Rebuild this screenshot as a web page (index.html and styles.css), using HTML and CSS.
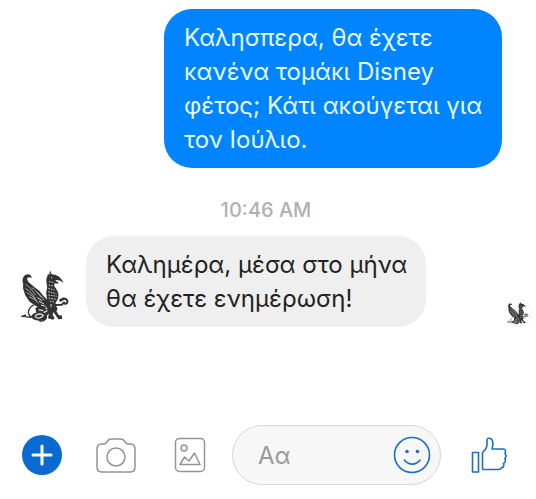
FILE: index.html
```
<!DOCTYPE html>
<html lang="el">
<head>
    <meta charset="utf-8">
    <meta name="viewport" content="width=device-width, initial-scale=1">
    <title>Chat</title>
    <link rel="stylesheet" href="styles.css">
</head>
<body>
    <!-- Shared griffin drawing, used by both avatars -->
    <svg class="symbols" aria-hidden="true">
        <symbol id="griffin" viewBox="27 27 150 156">
            <!-- wing -->
            <path fill="#333335" d="M62 52C63 41 51 36 43 42C34 48 33 60 37 70C34 80 38 88 40 94C41 104 47 108 50 114C54 123 62 126 69 131C78 139 88 140 98 142L114 138L112 123C106 112 98 106 92 98C84 86 72 82 64 73C56 67 49 60 48 54C50 48 56 46 62 52Z"/>
            <path fill="none" stroke="#ddd" stroke-width="2" d="M44 70C54 77 65 88 73 103M43 83C54 88 65 99 73 113M47 95C58 99 69 109 78 121M54 108C64 110 73 117 83 127M62 80C73 87 83 97 90 109M76 93C86 100 94 107 99 118"/>
            <path fill="none" stroke="#ddd" stroke-width="3" d="M79 110L93 119M84 121L99 129M90 132L104 136"/>
            <!-- head and hooked beak -->
            <path fill="#333335" d="M109 46L111 38L115 42L117 28L122 40C135 40 151 48 157 66C149 59 142 57 135 57L133 60L143 64L139 68L131 67L128 77L109 78C106 66 104 55 109 46Z"/>
            <circle cx="122" cy="50" r="2" fill="#eee"/>
            <!-- neck and chest -->
            <path fill="#333335" d="M109 73L129 72C132 82 143 90 142 102C143 114 136 120 134 126L129 146L110 148L106 132C110 121 106 113 107 103C103 95 109 88 109 73Z"/>
            <path fill="none" stroke="#ccc" stroke-width="3" stroke-dasharray="5 3" d="M114 62L127 64M113 72L127 75M112 82L130 87M111 92L136 98M112 102L138 106M113 111L134 115M116 120L129 123"/>
            <path fill="none" stroke="#ddd" stroke-width="3" d="M121 129L119 142"/>
            <!-- raised front leg -->
            <path fill="none" stroke="#333335" stroke-width="6" stroke-linejoin="round" d="M132 132L152 131L161 123M145 118L160 114M151 122C147 112 164 108 169 119C171 126 163 132 158 125"/>
            <!-- standing legs -->
            <path fill="#333335" d="M118 138L135 134L140 144L136 150L143 162L153 164L153 174L142 175L136 166L127 153L125 162L131 171L126 176L111 172L115 150Z"/>
            <!-- haunch and coiled tail -->
            <path fill="#333335" d="M73 142C84 132 99 137 107 145L119 145L115 157C109 162 105 165 107 173C98 181 77 181 66 174C56 166 64 157 76 155Z"/>
            <path fill="none" stroke="#ddd" stroke-width="4" d="M72 166C77 157 92 157 97 164C89 173 77 174 72 166M83 146L97 149M98 155L109 149"/>
            <path fill="none" stroke="#333335" stroke-width="4" d="M68 169C53 169 48 154 56 142C59 137 65 134 68 131M61 169C51 171 43 164 31 167L45 162M84 178C94 184 106 177 107 166"/>
        </symbol>
    </svg>

    <main class="chat">
        <div class="message sent">
            <p class="bubble">Καλησπερα, θα έχετε κανένα τομάκι Disney φέτος; Κάτι ακούγεται για τον Ιούλιο.</p>
        </div>

        <time class="timestamp" datetime="10:46">10:46 AM</time>

        <div class="message received">
            <svg class="avatar" role="img" aria-label="Griffin"><use href="#griffin"/></svg>
            <p class="bubble">Καλημέρα, μέσα στο μήνα θα έχετε ενημέρωση!</p>
            <span class="seen">
                <svg class="seen-avatar" role="img" aria-label="Seen"><use href="#griffin"/></svg>
            </span>
        </div>
    </main>

    <form class="composer">
        <div class="tools">
            <button type="button" class="icon-button" aria-label="More">
                <svg width="40" height="40" viewBox="0 0 40 40">
                    <circle cx="20" cy="20" r="20" fill="#0a6ad0"/>
                    <path d="M20 11V29M11 20H29" fill="none" stroke="#fff" stroke-width="3" stroke-linecap="round"/>
                </svg>
            </button>
            <button type="button" class="icon-button" aria-label="Camera">
                <svg width="40" height="36" viewBox="0 0 40 36" fill="none" stroke="#949494" stroke-width="1.5">
                    <path d="M6 7H8C10 7 10.5 5.5 11.5 4C12.5 2.3 13.5 2 15 2H25C26.5 2 27.5 2.3 28.5 4C29.5 5.5 30 7 32 7H34C37 7 39 9 39 12V30C39 33 37 35 34 35H6C3 35 1 33 1 30V12C1 9 3 7 6 7Z"/>
                    <circle cx="20" cy="20" r="9"/>
                </svg>
            </button>
            <button type="button" class="icon-button" aria-label="Gallery">
                <svg width="32" height="36" viewBox="0 0 32 36" fill="none" stroke="#949494" stroke-width="1.5" stroke-linejoin="round">
                    <rect x="1.5" y="1.5" width="29" height="33" rx="4"/>
                    <circle cx="10" cy="11" r="3"/>
                    <path d="M6 27.5L10.5 20L15 24L20.5 16L26 27.5Z"/>
                </svg>
            </button>
        </div>

        <div class="field">
            <input type="text" class="field-input" placeholder="Αα" aria-label="Message">
            <button type="button" class="icon-button" aria-label="Emoji">
                <svg width="38" height="38" viewBox="0 0 38 38">
                    <circle cx="19" cy="19" r="17.5" fill="none" stroke="#1b6fc4" stroke-width="1.6"/>
                    <circle cx="14" cy="15.5" r="1.8" fill="#1b6fc4"/>
                    <circle cx="24.5" cy="15.5" r="1.8" fill="#1b6fc4"/>
                    <path d="M11.5 24C15.5 29.5 23 29.5 27 24" fill="none" stroke="#1b6fc4" stroke-width="1.6" stroke-linecap="round"/>
                </svg>
            </button>
        </div>

        <button type="button" class="icon-button like" aria-label="Like">
            <svg width="36" height="36" viewBox="0 0 36 36" fill="none" stroke="#1b6fc4" stroke-width="1.6" stroke-linejoin="round">
                <path d="M1.5 15.5H7.5V35H1.5Z"/>
                <path d="M11.5 32V15.5C14 13.5 16 10 16 7V3C16 .5 20.5 .5 21.5 4C22.5 7 21.5 10 21 12H32C34.5 12 35.2 14.5 34 16.5C35.2 18 35.2 20 33.8 21.5C35 23 34.5 25.5 32.5 26.5C33.5 28.5 32 31 30 31C29.5 32 29 32.5 27.5 32.5H12Z"/>
            </svg>
        </button>
    </form>
</body>
</html>
```
FILE: styles.css
```
* {
    box-sizing: border-box;
}

body {
    display: flex;
    flex-direction: column;
    min-height: 100vh;
    margin: 0;
    background-color: #fff;
    color: #222;
    font-family: Inter, "Noto Sans", sans-serif;
}

.symbols {
    position: absolute;
    width: 0;
    height: 0;
}

.chat {
    display: flex;
    flex: 1;
    flex-direction: column;
    padding: 9px 4px 0 20px;
}

.message {
    display: flex;
}

.bubble {
    max-width: 340px;
    margin: 0;
    padding: 12px 18px 11px 20px;
    border-radius: 28px;
    font-size: 24px;
    line-height: 34px;
}

.sent {
    justify-content: flex-end;
    padding-right: 30px;
}

.sent .bubble {
    max-width: 338px;
    background-color: #0084ff;
    color: #e6fbff;
}

.received {
    align-items: flex-end;
}

.received .bubble {
    margin-left: 16px;
    background-color: #efefef;
}

.timestamp {
    margin: 30px 20px 14px 0;
    color: #b0b0b0;
    font-size: 20px;
    font-weight: 500;
    line-height: 24px;
    text-align: center;
}

.avatar {
    flex: none;
    width: 50px;
    height: 52px;
    margin-bottom: 5px;
}

.seen {
    display: flex;
    flex: none;
    align-items: center;
    justify-content: center;
    width: 28px;
    height: 28px;
    margin-left: auto;
    border: 1px solid #f3f3f3;
    border-radius: 50%;
}

.seen-avatar {
    width: 22px;
    height: 24px;
}

.composer {
    display: flex;
    align-items: center;
    gap: 22px;
    padding: 0 21px 14px 22px;
}

.tools {
    display: flex;
    gap: 34px;
}

.icon-button {
    display: flex;
    flex: none;
    align-items: center;
    justify-content: center;
    width: 40px;
    height: 40px;
    padding: 0;
    border: none;
    background: none;
    cursor: pointer;
}

.like {
    width: 52px;
}

.field {
    display: flex;
    flex: 1;
    align-items: center;
    min-width: 0;
    height: 60px;
    padding: 0 8px 0 25px;
    border: 1px solid #d6d6d6;
    border-radius: 30px;
    background-color: #f7f7f7;
}

.field-input {
    flex: 1;
    min-width: 0;
    padding: 0;
    border: none;
    outline: none;
    background: none;
    color: #222;
    font-family: inherit;
    font-size: 24px;
}

.field-input::placeholder {
    color: #999;
    opacity: 1;
}
```
